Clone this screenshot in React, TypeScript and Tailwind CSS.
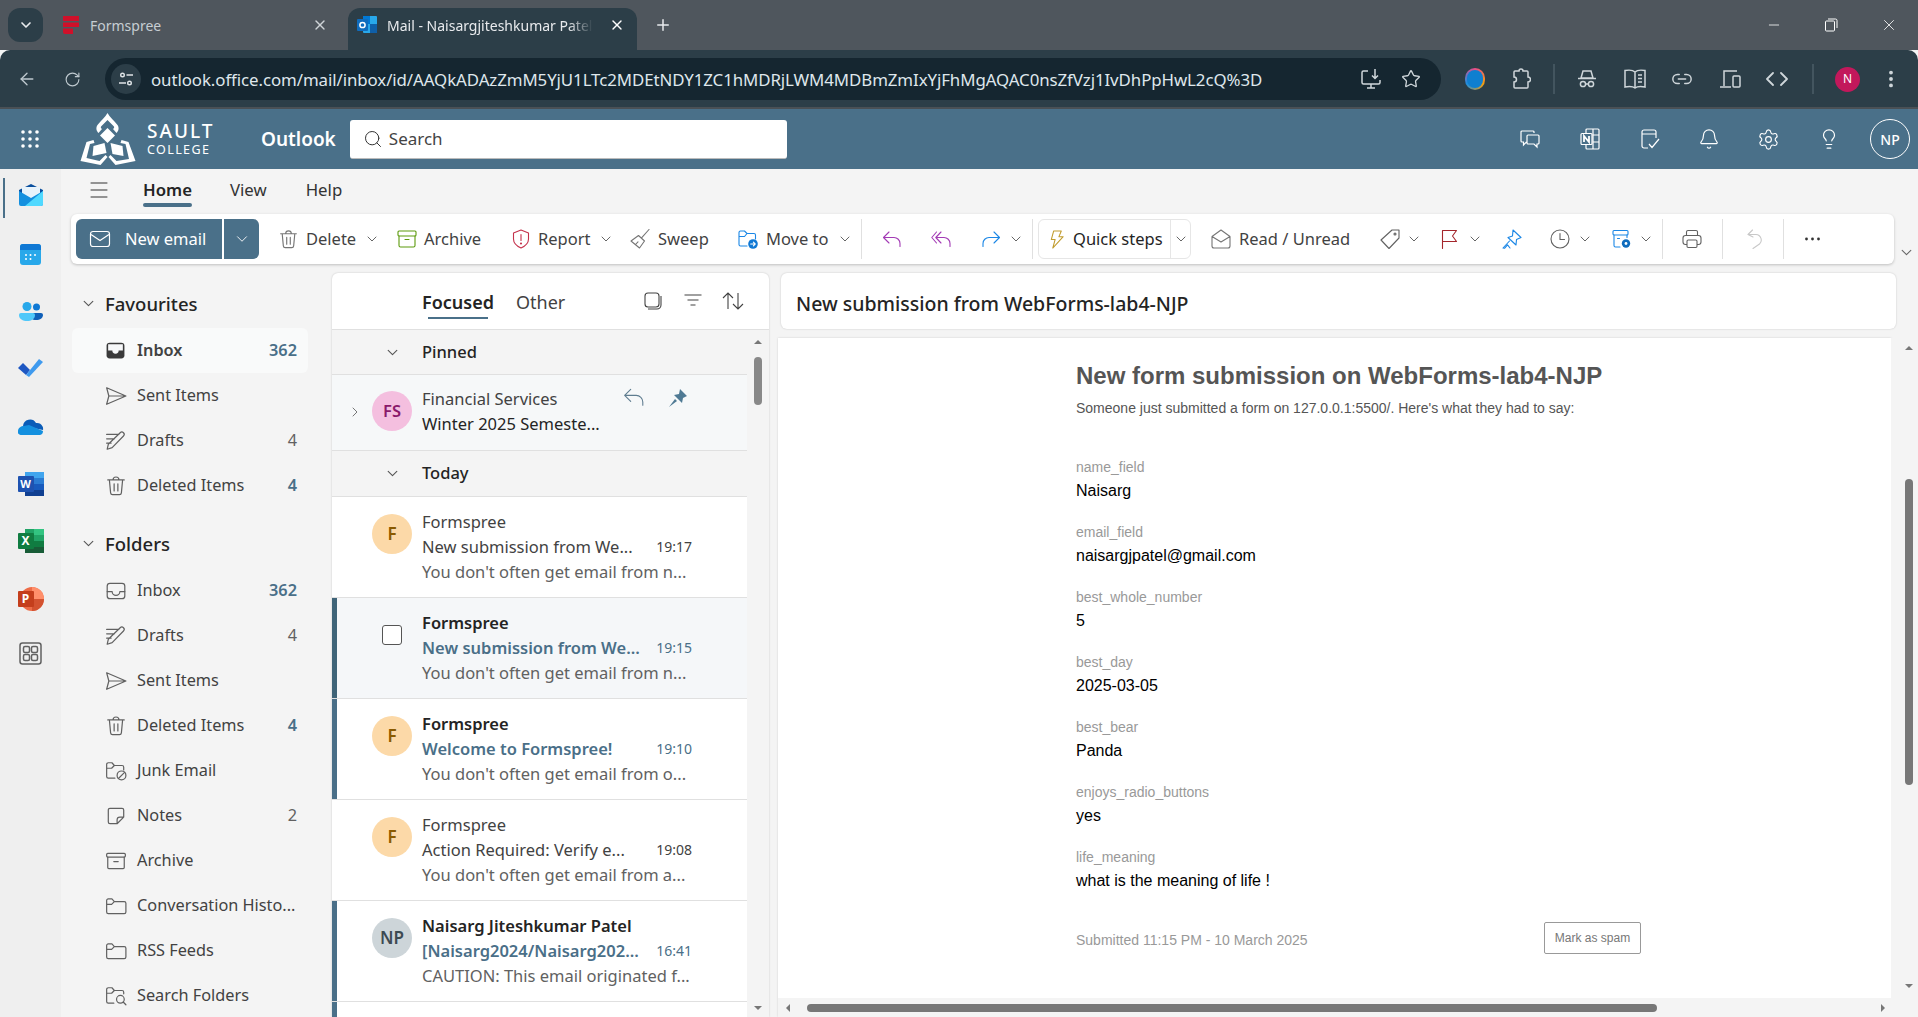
import React from "react";
import { ChevronDown, ChevronRight, ArrowLeft, RotateCw, Plus, X, Minus, Star, Search, Menu, EllipsisVertical, Settings, Lightbulb, Bell, Link2 } from "lucide-react";

type IP = { s?: number; c?: string; w?: number; className?: string; children?: React.ReactNode };
const S = ({ s = 20, c = "#616161", w = 1.1, className, children }: IP) => (
  <svg width={s} height={s} viewBox="0 0 20 20" fill="none" stroke={c} strokeWidth={w} strokeLinecap="round" strokeLinejoin="round" className={"shrink-0 " + (className || "")}>
    {children}
  </svg>
);
const Chev = ({ s = 12, c = "#666", className }: { s?: number; c?: string; className?: string }) => (
  <svg width={s} height={s} viewBox="0 0 12 12" fill="none" stroke={c} strokeWidth={1} strokeLinecap="round" strokeLinejoin="round" className={"shrink-0 " + (className || "")}><path d="M2 4l4 4 4-4" /></svg>
);
const Trash = (p: IP) => <S {...p}><path d="M2.5 4.5h15M7.3 4.5a2.7 2.7 0 0 1 5.4 0M4 4.5l1.1 11.7a1.8 1.8 0 0 0 1.8 1.6h6.2a1.8 1.8 0 0 0 1.8-1.6L16 4.5M8.3 8v6.5M11.7 8v6.5" /></S>;
const ArchiveI = (p: IP) => <S {...p}><rect x="1" y="2" width="18" height="5" rx="1" /><path d="M2 7v9.500A1.500 1.500 0 0 0 3.500 18h13a1.500 1.500 0 0 0 1.500-1.500V7M8 10.500h4" /></S>;
const Shield = (p: IP) => <S {...p}><path d="M10 1l7.500 3V10c0 4.500-3 7-7.500 9C5.500 17 2.500 14.500 2.500 10V4zM10 5.500v6" /><circle cx="10" cy="14.500" r=".5" /></S>;
const Broom = (p: IP) => <S {...p}><path d="M19 .5l-7 7.800M8.500 6.500l6 5.500-5 7L1 12zM5.500 15.500l2.500-2.700" /></S>;
const MoveTo = () => <S c="#1b87e6"><path d="M1 15.500V3.500A1.500 1.500 0 0 1 2.500 2h4L9 4.500h7A1.500 1.500 0 0 1 17.500 6v4M1 15.500A1.500 1.500 0 0 0 2.500 17H9M1 7.500h5.500L9 4.500" /><circle cx="15" cy="15" r="4.800" fill="#0f78d4" stroke="none" /><path d="M12.700 15h4.400M15.400 13.200l1.800 1.800-1.800 1.800" stroke="#fff" /></S>;
const Reply = (p: IP) => <S {...p}><path d="M7 3L1.500 8.500 7 14M1.500 8.500H12a6 6 0 0 1 6 6v3" /></S>;
const ReplyAll = (p: IP) => <S {...p}><path d="M5.500 3L.8 8.500 5.500 14M10 3L4.800 8.500 10 14M4.800 8.500H13a6 6 0 0 1 6 6v3" /></S>;
const Forward = (p: IP) => <S {...p}><path d="M13 3l5.500 5.500L13 14M18.500 8.500H8a6 6 0 0 0-6 6v3" /></S>;
const Bolt = (p: IP) => <S {...p}><path d="M6 1h8L11.500 7H16L5 19l2.500-9H3.500z" /></S>;
const ReadI = (p: IP) => <S {...p}><path d="M1 7.500L10 1l9 6.500V17a2 2 0 0 1-2 2H3a2 2 0 0 1-2-2zM1 7.500L10 13l9-5.500" /></S>;
const Tag = (p: IP) => <S {...p}><path d="M12 1h7v8L9 19.500 1 11z" /><circle cx="15" cy="5" r="1" /></S>;
const Flag = (p: IP) => <S {...p}><path d="M3.500 19.500V1.500h14l-4 5.500 4 5.500h-14" /></S>;
const PinI = (p: IP) => <S {...p}><path d="M11 1l8 7.500-4.500 2L14 16 6 8.500l4.500-1.500zM7.500 12L1 19l1.500.3 3-3.500L8 19" /></S>;
const Clock = (p: IP) => <S {...p}><circle cx="10" cy="10" r="9" /><path d="M10 4.500v6h4.500" /></S>;
const CalGear = () => <S c="#1b87e6"><rect x="1" y="1.500" width="15" height="4.500" rx="1" /><path d="M2 6v10.500A1.500 1.500 0 0 0 3.500 18H8M15 6v2.500M5.500 9.500h2" /><circle cx="14" cy="14.500" r="4.200" fill="#0f6cbd" stroke="none" /><circle cx="14" cy="14.500" r="1.400" fill="#fff" stroke="none" /></S>;
const Print = (p: IP) => <S {...p}><path d="M4.500 6.500V3A1.500 1.500 0 0 1 6 1.500h8A1.500 1.500 0 0 1 15.500 3v3.500" /><rect x="1" y="6.500" width="18" height="9" rx="2.500" /><rect x="5" y="11" width="10" height="7.500" rx="1.200" fill="#fff" /></S>;
const Undo = (p: IP) => <S {...p}><path d="M7.500 1L3 5.500l5 2.500M3 5.500h8A5.500 5.500 0 0 1 14.500 15L8 19.500" /></S>;
const Sent = (p: IP) => <S {...p}><path d="M1.500 2.500l17.500 7.500-17.500 7.500 2-7.500zM3.500 10H19" /></S>;
const Draft = (p: IP) => <S {...p}><path d="M1.500 4h11M1.500 8h7M1.500 12h4M2 17.500l1-4.500L13.800 2.500a2 2 0 0 1 3 3L6.500 16z" /></S>;
const InboxI = (p: IP) => <S {...p}><rect x="2" y="3" width="16" height="14" rx="2.500" /><path d="M2 10.500h4.500a3.500 3.500 0 0 0 7 0H18" /></S>;
const InboxFill = () => <svg width="21" height="21" viewBox="0 0 20 20" className="shrink-0"><rect x="1.500" y="2.500" width="17" height="15" rx="3" fill="#3a3a3a" /><path d="M3 4h14v6h-4a3 3 0 0 1-6 0H3z" fill="#f7f8f9" /></svg>;
const Junk = (p: IP) => <S {...p}><path d="M1.500 15V4A1.500 1.500 0 0 1 3 2.500h3.300L8.500 5h7A1.500 1.500 0 0 1 17 6.500V9M1.500 15A1.500 1.500 0 0 0 3 16.500h6M1.500 7.500h4.500L8.500 5" /><circle cx="15" cy="14" r="4" /><path d="M12.200 16.800l5.600-5.600" /></S>;
const Note = (p: IP) => <S {...p}><path d="M4.500 3h11A1.500 1.500 0 0 1 17 4.500V11l-6 6H4.500A1.500 1.500 0 0 1 3 15.500v-11A1.500 1.500 0 0 1 4.500 3zM17 11h-3.500a2.500 2.500 0 0 0-2.500 2.500V17" /></S>;
const Arch2 = (p: IP) => <S {...p}><rect x="1.500" y="3" width="17" height="3.500" rx="1" /><path d="M2.500 6.500V16a1 1 0 0 0 1 1h13a1 1 0 0 0 1-1V6.500M8 10.500h4" /></S>;
const Folder = (p: IP) => <S {...p}><path d="M1.500 15.500V5A1.500 1.500 0 0 1 3 3.500h3.300L8.500 6h9A1.500 1.500 0 0 1 19 7.500v8a1.500 1.500 0 0 1-1.500 1.500H3a1.500 1.500 0 0 1-1.500-1.500zM1.500 8.500h4.500L8.500 6" /></S>;
const FolderS = (p: IP) => <S {...p}><path d="M1.500 15V4A1.500 1.500 0 0 1 3 2.500h3.300L8.500 5h7A1.500 1.500 0 0 1 17 6.500V8M1.500 15A1.500 1.500 0 0 0 3 16.500h5M1.500 7.500h4.500L8.500 5" /><circle cx="14" cy="13" r="3.500" /><path d="M16.500 15.500l2.500 2.500" /></S>;

const RailIcon = ({ children, h }: { children: React.ReactNode; h: string }) => (
  <div className={"flex items-center justify-center w-full shrink-0 " + h}>{children}</div>
);

const navTop = [
  { icon: <InboxFill />, label: "Inbox", count: "362", active: true, bold: true },
  { icon: <Sent s={22} />, label: "Sent Items" },
  { icon: <Draft s={22} />, label: "Drafts", count: "4" },
  { icon: <Trash s={22} />, label: "Deleted Items", count: "4", bold: true },
];
const navFolders = [
  { icon: <InboxI s={22} />, label: "Inbox", count: "362", bold: true },
  { icon: <Draft s={22} />, label: "Drafts", count: "4" },
  { icon: <Sent s={22} />, label: "Sent Items" },
  { icon: <Trash s={22} />, label: "Deleted Items", count: "4", bold: true },
  { icon: <Junk s={22} />, label: "Junk Email" },
  { icon: <Note s={22} />, label: "Notes", count: "2" },
  { icon: <Arch2 s={22} />, label: "Archive" },
  { icon: <Folder s={22} />, label: "Conversation Histo..." },
  { icon: <Folder s={22} />, label: "RSS Feeds" },
  { icon: <FolderS s={22} />, label: "Search Folders" },
];

type N = { icon: React.ReactNode; label: string; count?: string; active?: boolean; bold?: boolean };
const NavRow = ({ n }: { n: N }) => (
  <div className={"flex items-center h-[45px] w-[236px] ml-[11px] pl-[33px] pr-[11px] rounded-md " + (n.active ? "bg-[#f9fafa]" : "")}>
    <span className="w-[32px] shrink-0 flex"><span className="flex">{n.icon}</span></span>
    <span className={"flex-1 whitespace-nowrap text-[#424242] " + (n.active ? "font-semibold text-[#242424]" : "")}>{n.label}</span>
    {n.count && <span className={n.bold ? "font-semibold text-[#4a6f88]" : "text-[#616161]"}>{n.count}</span>}
  </div>
);

const NavHead = ({ t, className }: { t: string; className?: string }) => (
  <div className={"flex items-center h-[45px] pl-[21px] mb-[2px] " + (className || "")}>
    <Chev s={13} c="#555" />
    <span className="ml-[10px] text-[18.5px] font-medium text-[#242424]">{t}</span>
  </div>
);

type M = { av: string; avc: string; avt: string; from: string; subj: string; time: string; prev: string; unread?: boolean; sel?: boolean };
const mails: M[] = [
  { av: "F", avc: "bg-[#fcd9a8]", avt: "text-[#8a5a00]", from: "Formspree", subj: "New submission from We...", time: "19:17", prev: "You don't often get email from n..." },
  { av: "", avc: "", avt: "", from: "Formspree", subj: "New submission from We...", time: "19:15", prev: "You don't often get email from n...", unread: true, sel: true },
  { av: "F", avc: "bg-[#fcd9a8]", avt: "text-[#8a5a00]", from: "Formspree", subj: "Welcome to Formspree!", time: "19:10", prev: "You don't often get email from o...", unread: true },
  { av: "F", avc: "bg-[#fcd9a8]", avt: "text-[#8a5a00]", from: "Formspree", subj: "Action Required: Verify e...", time: "19:08", prev: "You don't often get email from a..." },
  { av: "NP", avc: "bg-[#cdd5d9]", avt: "text-[#3d4a52]", from: "Naisarg Jiteshkumar Patel", subj: "[Naisarg2024/Naisarg202...", time: "16:41", prev: "CAUTION: This email originated f...", unread: true },
];

const MailRow = ({ m }: { m: M }) => (
  <div className={"flex h-[101px] shrink-0 border-b border-[#e0e0e0] " + (m.sel ? "bg-[#f5f7f9]" : "bg-white")}>
    <div className={"w-[5px] shrink-0 " + (m.sel ? "bg-[#3f6478]" : m.unread ? "bg-[#4a6f88]" : "")} />
    <div className="w-[85px] shrink-0 flex justify-start pt-[17px] pl-[35px]">
      {m.sel ? (
        <div className="ml-[10px] mt-[10px] w-[20px] h-[20px] rounded-[3px] border border-[#555] bg-white" />
      ) : (
        <div className={"w-[40px] h-[40px] rounded-full flex items-center justify-center font-semibold text-[17px] " + m.avc + " " + m.avt}>{m.av}</div>
      )}
    </div>
    <div className="flex-1 min-w-0 pt-[12px] leading-[25px] pr-[55px]">
      <div className={"whitespace-nowrap text-[#242424] " + (m.unread ? "font-semibold" : "text-[#424242]")}>{m.from}</div>
      <div className="flex justify-between items-center">
        <span className={"whitespace-nowrap " + (m.unread ? "font-semibold text-[#4a6f88] " : "text-[#424242]") + (m.sel ? " text-[#3f6478]" : "")}>{m.subj}</span>
        <span className={"text-[14px] " + (m.unread ? "text-[#4a6f88] " : "text-[#424242]")}>{m.time}</span>
      </div>
      <div className="whitespace-nowrap text-[#616161]">{m.prev}</div>
    </div>
  </div>
);

const Field = ({ l, v }: { l: string; v: string }) => (
  <div className="h-[65px] font-['Liberation_Sans',Arial,sans-serif]">
    <div className="text-[14px] leading-[20px] text-[#999999]">{l}</div>
    <div className="text-[16px] leading-[24px] mt-[2px] text-black">{v}</div>
  </div>
);

const Txt = ({ t, className }: { t: string; className: string }) => <span className={"whitespace-nowrap shrink-0 " + className}>{t}</span>;
const Sep = ({ className }: { className?: string }) => <div className={"w-px h-[40px] bg-[#e0e0e0] shrink-0 " + (className || "")} />;

export default function App() {
  return (
    <div className="w-full h-[1017px] overflow-hidden flex flex-col bg-[#f4f4f4] font-['Noto_Sans','Open_Sans',sans-serif] text-[16.5px]">
      {/* tabs */}
      <div className="h-[50px] bg-[#4f565d] flex shrink-0 pt-[8px] pl-[8px]">
        <div className="w-[35px] h-[34px] rounded-xl bg-[#2c3e48] flex items-center justify-center"><ChevronDown size={16} color="#e8eaed" strokeWidth={2.5} /></div>
        <div className="w-[305px] flex items-center pl-[19px] pb-[8px] text-[14px] text-[#c6cdd2]">
          <svg width="17" height="18" viewBox="0 0 17 18" className="shrink-0"><path d="M1 0h16v5H1zM1 6.500h16V11H1zM1 12.500h10V18H3a2 2 0 0 1-2-2z" fill="#d0102a" /></svg>
          <span className="ml-[11px]">Formspree</span>
          <X size={16} color="#cfd4d8" className="ml-auto mr-[20px]" />
        </div>
        <div className="w-[289px] h-[42px] rounded-t-xl bg-[#2c3e48] flex items-center pl-[9px] pb-[8px] text-[14px] text-[#e8eaed]">
          <svg width="20" height="18" viewBox="0 0 20 18" className="shrink-0"><rect x="6" y="0" width="14" height="17" rx="1" fill="#28a8ea" /><rect x="6" y="0" width="7" height="8" fill="#0078d4" /><rect x="13" y="8" width="7" height="9" fill="#0f5fa8" /><rect x="0" y="3" width="11" height="12" rx="1" fill="#0f6cbd" /><circle cx="5.500" cy="9" r="2.600" fill="none" stroke="#fff" strokeWidth="1.500" /></svg>
          <span className="ml-[10px] w-[206px] overflow-hidden whitespace-nowrap [mask-image:linear-gradient(to_right,black_88%,transparent)]">Mail - Naisargjiteshkumar Patel</span>
          <X size={16} color="#fff" className="ml-[16px]" />
        </div>
        <Plus size={18} color="#e8eaed" className="ml-[17px] mt-[8px]" />
        <div className="ml-auto flex pr-[20px] pb-[8px] items-center">
          <Minus size={16} color="#fff" strokeWidth={1.2} />
          <svg width="16" height="16" viewBox="0 0 16 16" fill="none" stroke="#fff" strokeWidth="1" className="ml-[41px]"><rect x="2.500" y="4" width="9" height="10" rx="1" /><path d="M5 2h7.500A1.500 1.500 0 0 1 14 3.500V11" /></svg>
          <X size={18} color="#fff" strokeWidth={1.1} className="ml-[41px]" />
        </div>
      </div>
      {/* address bar */}
      <div className="h-[59px] bg-[#2c3e48] flex items-start pt-[8px] shrink-0 rounded-t-[10px] border-b-[2px] border-[#4a5055]">
        <ArrowLeft size={20} color="#bfc9cf" className="ml-[17px] mt-[11px]" strokeWidth={1.6} />
        <RotateCw size={17} color="#bfc9cf" className="ml-[27px] mt-[13px]" strokeWidth={1.6} />
        <div className="ml-[24px] w-[1336px] h-[42px] rounded-full bg-[#152630] flex items-center pl-[6px]">
          <div className="w-[30px] h-[30px] rounded-full bg-[#2c3e48] flex items-center justify-center">
            <svg width="16" height="16" viewBox="0 0 16 16" fill="none" stroke="#dfe3e6" strokeWidth="1.400"><circle cx="4.500" cy="4" r="1.800" /><path d="M8.500 4H15M1 12h7" /><circle cx="11.500" cy="12" r="1.800" /></svg>
          </div>
          <span className="ml-[10px] mt-[1px] text-[#dfe7ec] text-[16.85px] whitespace-nowrap tracking-[-0.08px]">outlook.office.com/mail/inbox/id/AAQkADAzZmM5YjU1LTc2MDEtNDY1ZC1hMDRjLWM4MDBmZmIxYjFhMgAQAC0nsZfVzj1IvDhPpHwL2cQ%3D</span>
          <div className="ml-auto flex items-center pr-[20px]">
            <svg width="22" height="22" viewBox="0 0 22 22" fill="none" stroke="#cfd6da" strokeWidth="1.500" className="shrink-0"><path d="M8 3H3.500A1.500 1.500 0 0 0 2 4.500v10A1.500 1.500 0 0 0 3.500 16h15a1.500 1.500 0 0 0 1.500-1.500V12M7 20h8M11 16v4M15 1v9M12 7.500l3 3 3-3" /></svg>
            <Star size={20} color="#cfd6da" strokeWidth={1.6} className="ml-[19px]" />
          </div>
        </div>
        <div className="flex items-center h-[42px] ml-[24px]">
          <div className="w-[20px] h-[22px] rounded-full bg-[conic-gradient(#ea4c89,#f59e0b,#1d8fe0,#ea4c89)] flex items-center justify-center shrink-0"><div className="w-[16px] h-[18px] rounded-full bg-[#0f7fd0]" /></div>
          <svg width="20" height="22" viewBox="0 0 20 22" fill="none" stroke="#cfd6da" strokeWidth="1.500" className="ml-[26px] shrink-0"><path d="M7 3h1a2 2 0 0 1 4 0h4a1 1 0 0 1 1 1v5a2.500 2.500 0 0 1 0 5v5a1 1 0 0 1-1 1H4a1 1 0 0 1-1-1v-5a2.500 2.500 0 0 0 0-5V4a1 1 0 0 1 1-1z" /></svg>
          <div className="w-[2px] h-[30px] bg-[#43555f] ml-[22px]" />
          <svg width="20" height="20" viewBox="0 0 20 20" fill="none" stroke="#cfd6da" strokeWidth="1.500" className="ml-[22px] shrink-0"><path d="M6 2h8l2 7H4zM1 9.500h18" /><circle cx="6" cy="15" r="2.600" /><circle cx="14" cy="15" r="2.600" /><path d="M8.600 15h2.800" /></svg>
          <svg width="24" height="22" viewBox="0 0 24 22" fill="none" stroke="#cfd6da" strokeWidth="1.500" className="ml-[26px] shrink-0"><path d="M12 4c-2-2-7-2-10-1.500V19c3-.5 8-.5 10 1 2-1.500 7-1.500 10-1V2.500C19 2 14 2 12 4zM12 4v16M15 7h4M15 10.500h4M15 14h4" /></svg>
          <Link2 size={22} color="#cfd6da" strokeWidth={1.6} className="ml-[24px]" />
          <svg width="22" height="22" viewBox="0 0 22 22" fill="none" stroke="#cfd6da" strokeWidth="1.500" className="ml-[26px] shrink-0"><path d="M18 3H5v15M1 19h11" /><rect x="14" y="8" width="7" height="11" rx="1" /></svg>
          <svg width="22" height="22" viewBox="0 0 22 22" fill="none" stroke="#cfd6da" strokeWidth="1.800" strokeLinecap="round" strokeLinejoin="round" className="ml-[25px] shrink-0"><path d="M7 5l-6 6 6 6M15 5l6 6-6 6" /></svg>
          <div className="w-[2px] h-[30px] bg-[#43555f] ml-[24px]" />
          <div className="w-[25px] h-[25px] rounded-full bg-[#c2185b] text-white text-[12px] flex items-center justify-center ml-[21px] shrink-0">N</div>
          <EllipsisVertical size={22} color="#cfd6da" className="ml-[20px]" strokeWidth={2.2} />
        </div>
      </div>
      {/* outlook header */}
      <div className="h-[60px] bg-[#4a7089] flex items-center shrink-0 text-white">
        <svg width="20" height="20" viewBox="0 0 20 20" fill="#fff" className="ml-[20px] shrink-0">
          <circle cx="3" cy="3" r="1.800" /><circle cx="10" cy="3" r="1.800" /><circle cx="17" cy="3" r="1.800" /><circle cx="3" cy="10" r="1.800" /><circle cx="10" cy="10" r="1.800" /><circle cx="17" cy="10" r="1.800" /><circle cx="3" cy="17" r="1.800" /><circle cx="10" cy="17" r="1.800" /><circle cx="17" cy="17" r="1.800" />
        </svg>
        <svg width="56" height="52" viewBox="0 0 55 52" fill="#fff" className="ml-[40px] shrink-0">
          <path d="M27 0C29 4 34 8 37 12C39 15 38 18 36 20L32.500 16C34 15 34 14 33 13L27 7L21 13C20 14 20 15 21.500 16L18 20C16 18 15 15 17 12C20 8 25 4 27 0Z" />
          <path d="M27 15L34.500 22.500L27 30L19.500 22.500Z" />
          <path d="M13 33L24 30L26 40L12 43Z" />
          <path d="M30 30L42 33L43 43L32 41Z" />
          <path d="M6 29L13 27L14 30L9.500 31L6 45L19 48L25 42L27 44L20 52L0 48Z" />
          <path d="M48 29L41 27L40 30L45 31L48.500 46L36 48L30 42L28 44L35 52L55 48Z" />
        </svg>
        <div className="ml-[11px] w-[70px]">
          <div className="text-[19px] leading-[20px] tracking-[2px] font-medium">SAULT</div>
          <div className="text-[12.5px] leading-[14px] tracking-[1.4px] mt-[2px] whitespace-nowrap">COLLEGE</div>
        </div>
        <span className="ml-[44px] text-[19px] font-semibold">Outlook</span>
        <div className="ml-[14px] w-[437px] h-[39px] bg-white rounded-[3px] border-b border-[#bbb] flex items-center pl-[13px] text-[#444] text-[17px]">
          <Search size={20} strokeWidth={1.2} color="#333" />
          <span className="ml-[6px]">Search</span>
        </div>
        <div className="ml-auto flex items-center pr-[8px]">
          <svg width="20" height="20" viewBox="0 0 20 20" fill="none" stroke="#fff" strokeWidth="1.200"><path d="M14 4V3a1 1 0 0 0-1-1H2a1 1 0 0 0-1 1v9a1 1 0 0 0 1 1h1.500v3l3-3M8 6h10a1 1 0 0 1 1 1v7a1 1 0 0 1-1 1h-1v3l-3-3H8a1 1 0 0 1-1-1V7a1 1 0 0 1 1-1z" /></svg>
          <svg width="20" height="22" viewBox="0 0 20 22" fill="none" stroke="#fff" strokeWidth="1.200" className="ml-[40px]"><rect x="6" y="1" width="13" height="20" rx="1" /><path d="M13 1v20M13 7h6M13 14h6" /><rect x="1" y="5.500" width="11" height="11" rx="1" fill="#4a7089" /><path d="M4 14V8l5 6V8" strokeWidth="1.800" /></svg>
          <svg width="20" height="22" viewBox="0 0 20 22" fill="none" stroke="#fff" strokeWidth="1.200" className="ml-[40px]"><path d="M8 20H4a2 2 0 0 1-2-2V4a2 2 0 0 1 2-2h10a2 2 0 0 1 2 2v6M2 6h14M9 16l3 3.500L19 11" /></svg>
          <Bell size={22} color="#fff" strokeWidth={1.3} className="ml-[38px]" />
          <Settings size={23} color="#fff" strokeWidth={1.2} className="ml-[37px]" />
          <Lightbulb size={22} color="#fff" strokeWidth={1.3} className="ml-[38px]" />
          <div className="w-[40px] h-[40px] rounded-full border border-white flex items-center justify-center text-[14px] ml-[30px] font-medium">NP</div>
        </div>
      </div>
      {/* app body */}
      <div className="flex-1 flex min-h-0">
        {/* rail */}
        <div className="w-[61px] shrink-0 bg-[#efefef] flex flex-col">
          <div className="flex items-center h-[52px] shrink-0 relative justify-center">
            <div className="absolute left-[3px] top-[9px] w-[2px] h-[40px] bg-[#4a7089]" />
            <svg width="24" height="22" viewBox="0 0 24 22"><path d="M0 6L12 0l12 6v4H0z" fill="#0a4f9e" /><rect x="3" y="3" width="18" height="10" fill="#e8f3fb" /><path d="M0 7l12 7 12-7v13a2 2 0 0 1-2 2H2a2 2 0 0 1-2-2z" fill="#1490df" /><path d="M24 7v13a2 2 0 0 1-2 2H6z" fill="#50d9ff" /></svg>
          </div>
          <RailIcon h="h-[66px]">
            <svg width="21" height="21" viewBox="0 0 21 21"><rect width="21" height="21" rx="3" fill="#28a8ea" /><path d="M0 3a3 3 0 0 1 3-3h15a3 3 0 0 1 3 3v3H0z" fill="#0f78d4" /><g fill="#fff"><circle cx="6" cy="11" r="1" /><circle cx="10.500" cy="11" r="1" /><circle cx="15" cy="11" r="1" /><circle cx="6" cy="15" r="1" /><circle cx="10.500" cy="15" r="1" /></g></svg>
          </RailIcon>
          <RailIcon h="h-[50px]">
            <svg width="24" height="20" viewBox="0 0 24 20"><circle cx="17.500" cy="5" r="3.500" fill="#0f78d4" /><path d="M11 11h11a2 2 0 0 1 2 2c0 3-3 5-7 5s-6-2-6-5z" fill="#0f5fb8" /><circle cx="8" cy="4.500" r="4.500" fill="#28a8ea" /><path d="M2 11h12a2 2 0 0 1 2 2c0 4-4 6-8 6s-8-2-8-6a2 2 0 0 1 2-2z" fill="#50c8fa" /></svg>
          </RailIcon>
          <RailIcon h="h-[62px]">
            <svg width="25" height="20" viewBox="0 0 25 20"><path d="M0 10l5-5 7 7-4 5z" fill="#1e57c2" /><path d="M8 17L21 1l4 3-14 15z" fill="#3f9aee" /></svg>
          </RailIcon>
          <RailIcon h="h-[56px]">
            <svg width="26" height="16" viewBox="0 0 26 16"><path d="M5 7a7 7 0 0 1 13-3 6 6 0 0 1 7 7z" fill="#0a5cb8" /><path d="M0 12c0-3 3-5 6-5l5-1 14 6a4 4 0 0 1-3 4H3a3 3 0 0 1-3-4z" fill="#1490df" /></svg>
          </RailIcon>
          <RailIcon h="h-[58px]">
            <div className="relative w-[26px] h-[24px]">
              <svg width="26" height="24" viewBox="0 0 26 24"><rect x="7" y="0" width="19" height="24" fill="#185abd" /><rect x="7" y="0" width="19" height="6" fill="#41a5ee" /><rect x="7" y="6" width="19" height="6" fill="#2b7cd3" /><rect x="7" y="18" width="19" height="6" fill="#103f91" /><rect x="0" y="4" width="16" height="16" rx="1" fill="#1e52b0" /></svg>
              <span className="absolute left-0 top-[4px] w-[16px] h-[16px] flex items-center justify-center text-white text-[11px] font-bold">W</span>
            </div>
          </RailIcon>
          <RailIcon h="h-[56px]">
            <div className="relative w-[26px] h-[24px]">
              <svg width="26" height="24" viewBox="0 0 26 24"><rect x="7" y="0" width="19" height="24" fill="#185c37" /><rect x="7" y="0" width="19" height="6" fill="#21a366" /><rect x="16" y="0" width="10" height="6" fill="#33c481" /><rect x="16" y="6" width="10" height="6" fill="#21a366" /><rect x="16" y="12" width="10" height="6" fill="#107c41" /><rect x="0" y="4" width="16" height="16" rx="1" fill="#107c41" /></svg>
              <span className="absolute left-0 top-[4px] w-[16px] h-[16px] flex items-center justify-center text-white text-[12px] font-bold">X</span>
            </div>
          </RailIcon>
          <RailIcon h="h-[60px]">
            <div className="relative w-[26px] h-[24px]">
              <svg width="26" height="24" viewBox="0 0 26 24"><circle cx="14" cy="12" r="12" fill="#ed6c47" /><path d="M14 0a12 12 0 0 1 12 12H14z" fill="#ff8f6b" /><path d="M14 12h12a12 12 0 0 1-12 12z" fill="#d35230" /><rect x="0" y="4" width="16" height="16" rx="1" fill="#c43e1c" /></svg>
              <span className="absolute left-0 top-[4px] w-[16px] h-[16px] flex items-center justify-center text-white text-[12px] font-bold">P</span>
            </div>
          </RailIcon>
          <RailIcon h="h-[48px]">
            <svg width="23" height="23" viewBox="0 0 23 23" fill="none" stroke="#616161" strokeWidth="1.500"><rect x="1" y="1" width="21" height="21" rx="2.500" /><rect x="4.500" y="4.500" width="6" height="6" rx="1.500" /><rect x="12.500" y="4.500" width="6" height="6" rx="1.500" /><rect x="4.500" y="12.500" width="6" height="6" rx="1.500" /><rect x="12.500" y="12.500" width="6" height="6" rx="1.500" /></svg>
          </RailIcon>
        </div>
        {/* right of rail */}
        <div className="flex-1 min-w-0 flex flex-col">
          <div className="h-[45px] flex items-center shrink-0 pb-[3px] text-[16.8px]">
            <Menu size={24} strokeWidth={1} color="#333" className="ml-[26px]" />
            <div className="ml-[32px] relative font-semibold text-[#242424]">Home<div className="absolute left-0 right-0 top-[26px] h-[4px] rounded-sm bg-[#4a7089]" /></div>
            <span className="ml-[38px] text-[#333]">View</span>
            <span className="ml-[39px] text-[#333]">Help</span>
          </div>
          <div className="flex items-start shrink-0">
            <div className="ml-[10px] w-[1823px] h-[50px] rounded-md bg-white shadow-[0_1px_3px_rgba(0,0,0,0.22)] flex items-center pl-[5px] text-[#424242]">
              <div className="flex h-[40px] rounded-md overflow-hidden text-white shrink-0">
                <div className="w-[146px] bg-[#4a7089] flex items-center pl-[13px]"><svg width="22" height="22" viewBox="0 0 22 22" fill="none" stroke="#fff" strokeWidth="1.200"><rect x="1.500" y="3.500" width="19" height="15" rx="2.500" /><path d="M2 6.500l9 6 9-6" /></svg><span className="ml-[14px]">New email</span></div>
                <div className="w-[2px] bg-white" />
                <div className="w-[35px] bg-[#4a7089] flex items-center justify-center"><ChevronDown size={18} strokeWidth={1.2} /></div>
              </div>
              <Trash s={21} c="#757575" className="ml-[19px]" /><Txt t="Delete" className="ml-[7px] w-[49px]" />
              <Chev className="ml-[11px]" />
              <ArchiveI c="#5c9a0c" className="ml-[19px]" /><Txt t="Archive" className="ml-[7px] w-[57px]" />
              <Shield c="#c4314b" className="ml-[30px]" /><Txt t="Report" className="ml-[7px] w-[52px]" />
              <Chev className="ml-[10px]" />
              <Broom c="#757575" className="ml-[18px]" /><Txt t="Sweep" className="ml-[8px] w-[50px]" />
              <div className="ml-[30px] flex shrink-0"><MoveTo /></div><Txt t="Move to" className="ml-[8px] w-[63px]" />
              <Chev className="ml-[10px]" />
              <Sep className="ml-[10px]" />
              <Reply c="#a33bb5" className="ml-[20px]" />
              <ReplyAll c="#a33bb5" className="ml-[29px]" />
              <Forward c="#1b87e6" className="ml-[30px]" />
              <Chev className="ml-[9px]" />
              <Sep className="ml-[10px]" />
              <div className="ml-[5px] w-[153px] h-[40px] rounded-md border border-[#e6e6e6] flex items-center pl-[9px] shrink-0 text-[#242424]">
                <Bolt c="#c19c2e" s={19} /><span className="ml-[6px] whitespace-nowrap">Quick steps</span>
                <div className="ml-auto w-[20px] h-full border-l border-[#e6e6e6] flex items-center justify-center"><Chev /></div>
              </div>
              <ReadI c="#757575" className="ml-[20px]" /><Txt t="Read / Unread" className="ml-[8px] w-[111px]" />
              <Tag c="#616161" className="ml-[30px]" />
              <Chev className="ml-[8px]" />
              <Flag c="#a4262c" className="ml-[19px]" />
              <Chev className="ml-[10px]" />
              <PinI c="#1b87e6" className="ml-[21px]" />
              <Clock c="#616161" className="ml-[28px]" />
              <Chev className="ml-[9px]" />
              <div className="ml-[21px] flex shrink-0"><CalGear /></div>
              <Chev className="ml-[8px]" />
              <Sep className="ml-[10px]" />
              <Print c="#616161" className="ml-[19px]" />
              <Sep className="ml-[20px]" />
              <Undo c="#c8c8c8" className="ml-[22px]" />
              <Sep className="ml-[18px]" />
              <svg width="15" height="4" viewBox="0 0 15 4" fill="#333" className="ml-[21px] shrink-0"><circle cx="1.500" cy="2" r="1.400" /><circle cx="7.500" cy="2" r="1.400" /><circle cx="13.500" cy="2" r="1.400" /></svg>
            </div>
            <Chev s={13} c="#666" className="ml-[6px] mt-[32px]" />
          </div>
          <div className="flex-1 min-h-0 flex mt-[9px]">
            {/* nav */}
            <div className="w-[271px] shrink-0 text-[#424242] pt-[8px] text-[16.3px]">
              <NavHead t="Favourites" />
              {navTop.map((n, i) => <NavRow key={i} n={n} />)}
              <NavHead t="Folders" className="mt-[13px]" />
              {navFolders.map((n, i) => <NavRow key={i} n={n} />)}
            </div>
            {/* list */}
            <div className="w-[437px] shrink-0 bg-white rounded-t-md shadow-[0_0_2px_rgba(0,0,0,0.2)] flex flex-col overflow-hidden">
              <div className="h-[57px] shrink-0 flex items-center border-b border-[#e0e0e0] pl-[90px] pr-[25px] pt-[3px]">
                <div className="relative font-semibold text-[18px] text-[#242424]">Focused<div className="absolute left-[6px] right-[6px] top-[28px] h-[2px] bg-[#4a7089]" /></div>
                <span className="ml-[22px] text-[18px] text-[#424242]">Other</span>
                <svg width="20" height="20" viewBox="0 0 20 20" fill="none" stroke="#424242" strokeWidth="1.100" className="ml-auto -mt-[3px]"><rect x="2" y="2" width="14" height="14" rx="3" /><path d="M18 5v9a4 4 0 0 1-4 4H5" /></svg>
                <svg width="20" height="20" viewBox="0 0 20 20" fill="none" stroke="#424242" strokeWidth="1.200" className="ml-[20px] -mt-[3px]"><path d="M1.500 4h17M4.500 9h11M7.500 14h5" /></svg>
                <svg width="22" height="20" viewBox="0 0 22 20" fill="none" stroke="#424242" strokeWidth="1.100" className="ml-[19px] -mt-[3px]"><path d="M6 18V2M1 7l5-5 5 5M16 2v16M11 13l5 5 5-5" /></svg>
              </div>
              <div className="flex-1 min-h-0 flex">
                <div className="w-[415px] shrink-0">
                  <div className="h-[45px] flex items-center bg-[#f4f4f4] border-b border-[#e0e0e0] pl-[54px] font-medium text-[#242424]"><Chev s={13} c="#555" /><span className="ml-[23px]">Pinned</span></div>
                  <div className="h-[76px] flex bg-[#f6f8f9] border-b border-[#e0e0e0]">
                    <ChevronRight size={16} strokeWidth={1.2} color="#555" className="ml-[15px] mt-[29px] shrink-0" />
                    <div className="w-[40px] h-[40px] mt-[16px] ml-[9px] rounded-full bg-[#f4bfdf] text-[#8a1a6b] font-semibold flex items-center justify-center shrink-0">FS</div>
                    <div className="ml-[10px] pt-[11px] leading-[25px] w-[201px] shrink-0">
                      <div className="text-[#424242] whitespace-nowrap">Financial Services</div>
                      <div className="text-[#242424] whitespace-nowrap">Winter 2025 Semeste...</div>
                    </div>
                    <Reply c="#5f7d90" s={22} w={1} className="mt-[11px]" />
                    <svg width="20" height="20" viewBox="0 0 20 20" className="ml-[23px] mt-[13px] shrink-0"><path d="M12 1l7 7-4 2-1 5-8-8 5-1zM7 11l-6 8 8-6z" fill="#4f7a94" /></svg>
                  </div>
                  <div className="h-[46px] flex items-center bg-[#f4f4f4] border-b border-[#e0e0e0] pl-[54px] font-medium text-[#242424]"><Chev s={13} c="#555" /><span className="ml-[23px]">Today</span></div>
                  {mails.map((m, i) => <MailRow key={i} m={m} />)}
                  <div className="h-[20px] flex bg-white"><div className="w-[5px] bg-[#4a7089]" /></div>
                </div>
                <div className="w-[22px] shrink-0 bg-[#f4f4f4] flex flex-col items-center pt-[10px]">
                  <div className="w-0 h-0 border-x-[4px] border-x-transparent border-b-[4px] border-b-[#777]" />
                  <div className="w-[8px] h-[48px] rounded-full bg-[#888] mt-[13px]" />
                  <div className="mt-auto mb-[7px] w-0 h-0 border-x-[4px] border-x-transparent border-t-[4px] border-t-[#777]" />
                </div>
              </div>
            </div>
            {/* reading */}
            <div className="flex-1 min-w-0 flex flex-col ml-[12px]">
              <div className="h-[56px] w-[1115px] shrink-0 bg-white rounded-md shadow-[0_0_2px_rgba(0,0,0,0.2)] flex items-center pl-[15px] pt-[6px] text-[19.5px] font-medium text-[#242424]">New submission from WebForms-lab4-NJP</div>
              <div className="flex-1 min-h-0 flex mt-[9px] -ml-[3px]">
                <div className="w-[1113px] shrink-0 bg-white flex flex-col shadow-[0_0_2px_rgba(0,0,0,0.15)]">
                  <div className="flex-1 pl-[298px] pt-[22px] font-['Liberation_Sans',Arial,sans-serif]">
                    <div className="text-[24px] leading-[32px] font-bold text-[#555555]">New form submission on WebForms-lab4-NJP</div>
                    <div className="text-[14px] leading-[20px] mt-[6px] text-[#555555]">Someone just submitted a form on 127.0.0.1:5500/. Here's what they had to say:</div>
                    <div className="mt-[39px]">
                      <Field l="name_field" v="Naisarg" />
                      <Field l="email_field" v="naisargjpatel@gmail.com" />
                      <Field l="best_whole_number" v="5" />
                      <Field l="best_day" v="2025-03-05" />
                      <Field l="best_bear" v="Panda" />
                      <Field l="enjoys_radio_buttons" v="yes" />
                      <Field l="life_meaning" v="what is the meaning of life !" />
                    </div>
                    <div className="w-[565px] flex items-center justify-between mt-[10px]">
                      <span className="text-[14px] text-[#999999] mt-[5px]">Submitted 11:15 PM - 10 March 2025</span>
                      <div className="w-[97px] h-[32px] border border-[#999] rounded-[2px] flex items-center justify-center text-[12px] text-[#777]">Mark as spam</div>
                    </div>
                  </div>
                  <div className="h-[19px] shrink-0 bg-[#f4f4f4] flex items-center">
                    <div className="ml-[8px] w-0 h-0 border-y-[4px] border-y-transparent border-r-[4px] border-r-[#777]" />
                    <div className="ml-[17px] w-[850px] h-[8px] rounded-full bg-[#777]" />
                    <div className="ml-auto mr-[6px] w-0 h-0 border-y-[4px] border-y-transparent border-l-[4px] border-l-[#777]" />
                  </div>
                </div>
                <div className="flex-1 bg-[#f4f4f4] flex flex-col items-end pr-[5px] pt-[8px]">
                  <div className="w-0 h-0 border-x-[4px] border-x-transparent border-b-[4px] border-b-[#777]" />
                  <div className="w-[8px] h-[306px] rounded-full bg-[#777] mt-[129px]" />
                  <div className="mt-[199px] w-0 h-0 border-x-[4px] border-x-transparent border-t-[4px] border-t-[#777]" />
                </div>
              </div>
            </div>
          </div>
        </div>
      </div>
    </div>
  );
}
